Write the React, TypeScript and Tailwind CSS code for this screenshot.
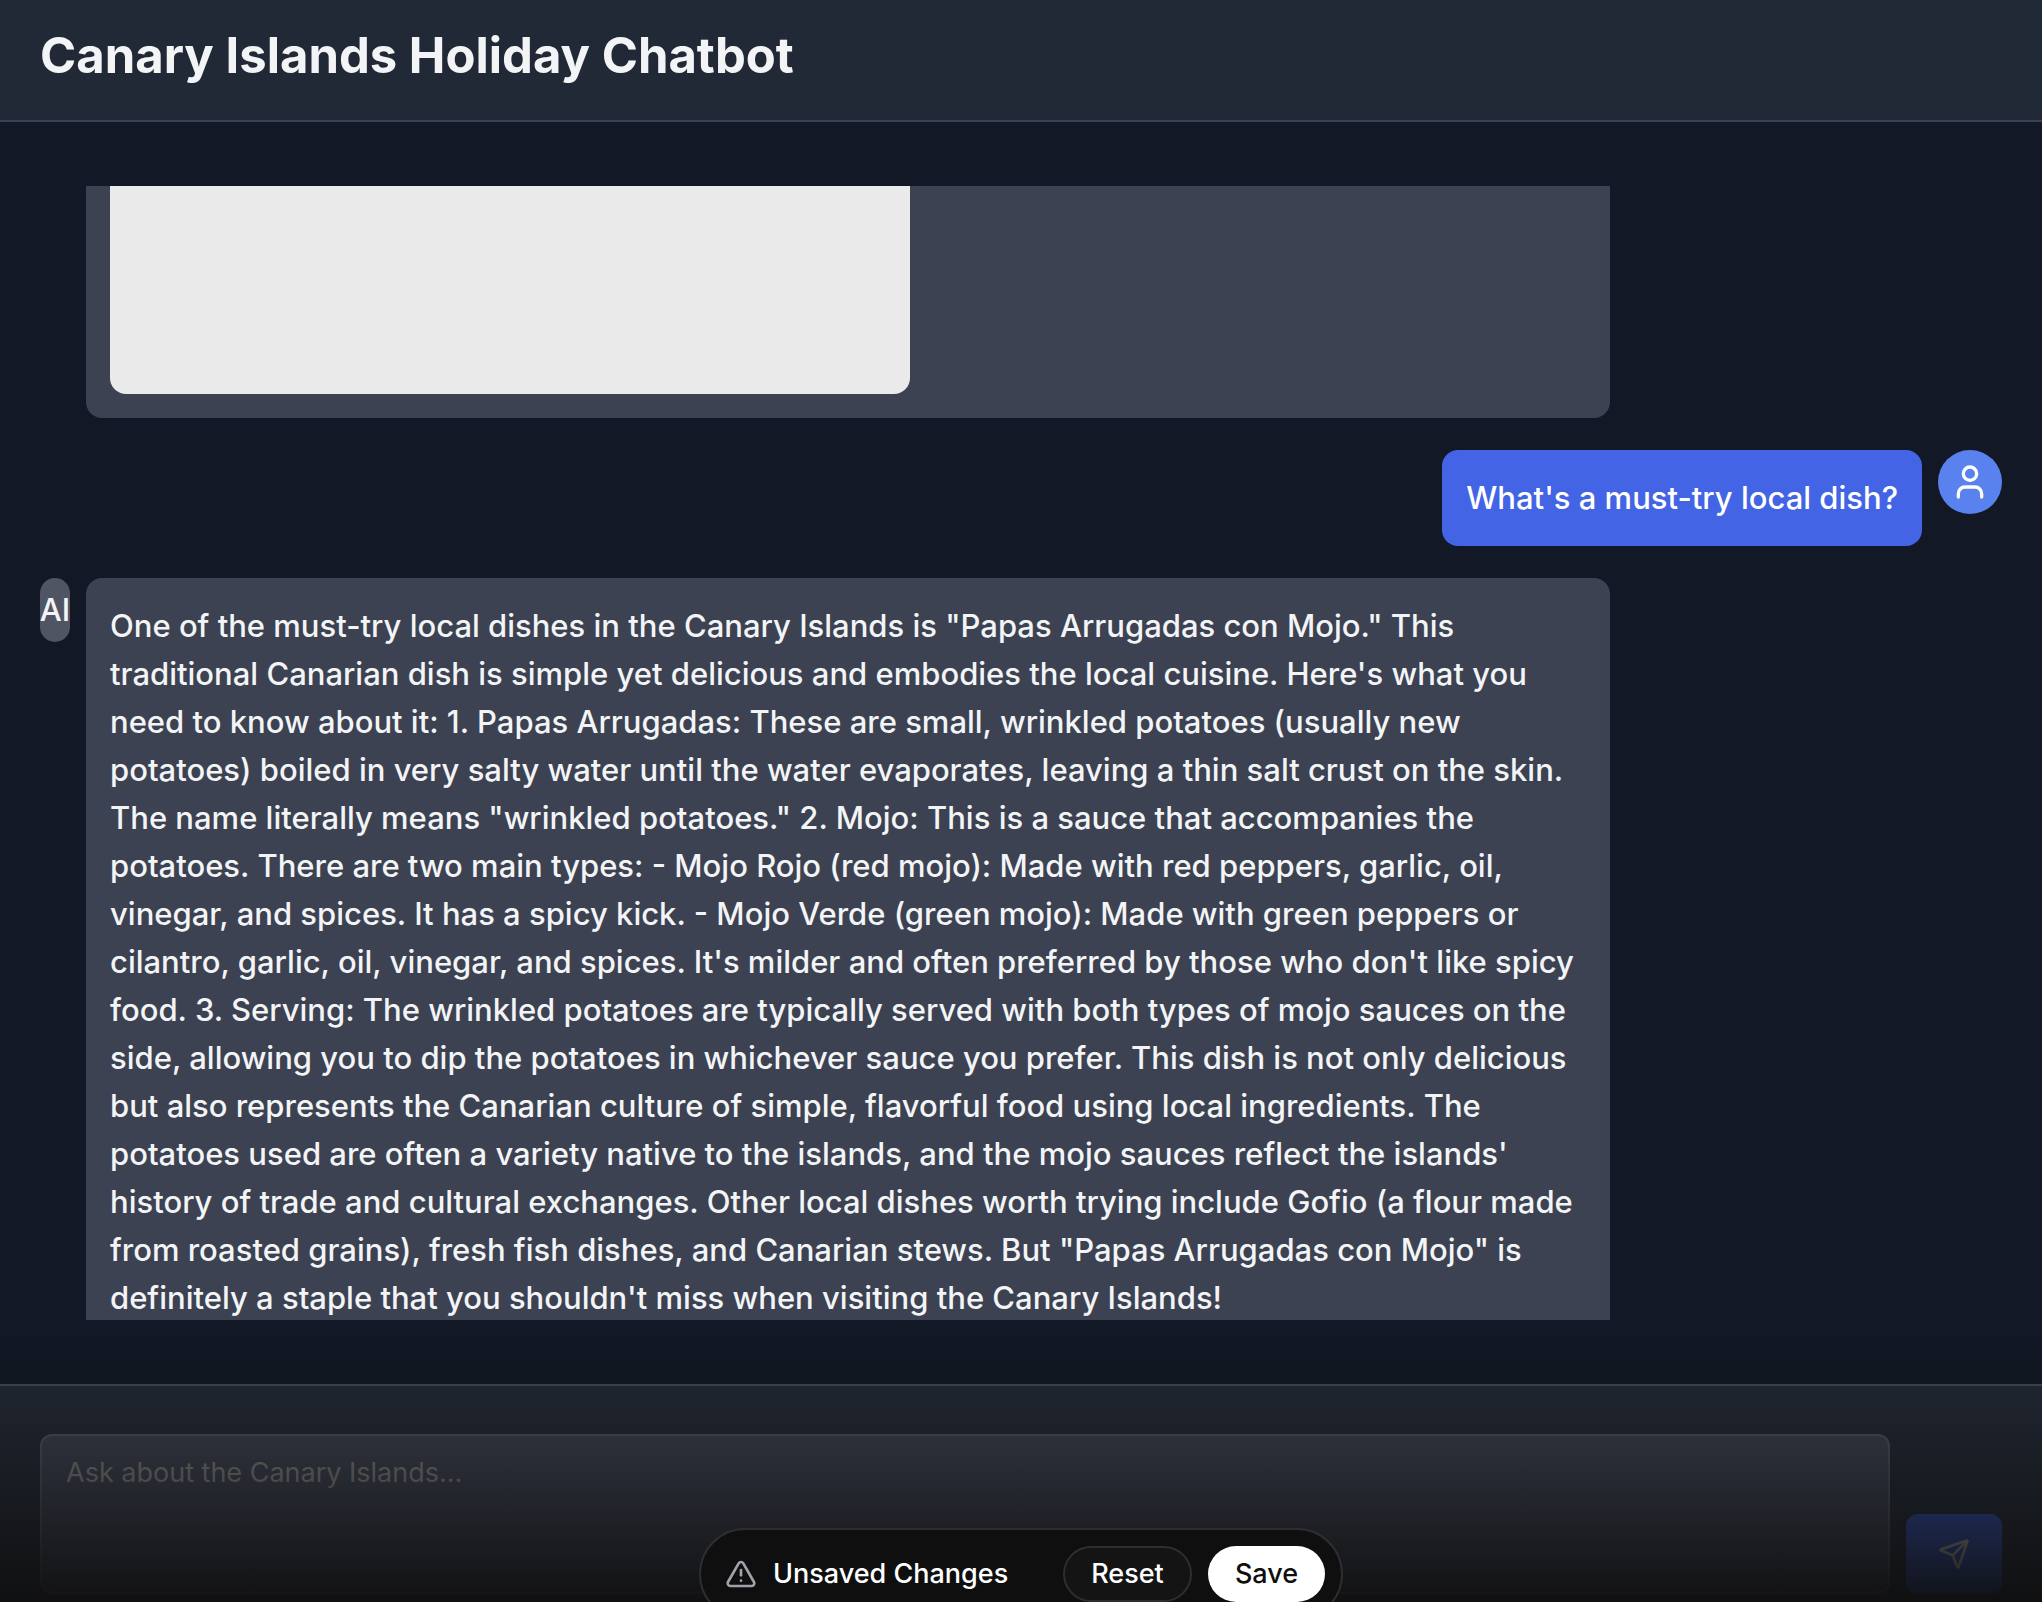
import { Send, TriangleAlert, User } from "lucide-react";

const answer =
  'One of the must-try local dishes in the Canary Islands is "Papas Arrugadas con Mojo." This ' +
  "traditional Canarian dish is simple yet delicious and embodies the local cuisine. Here's what you " +
  "need to know about it: 1. Papas Arrugadas: These are small, wrinkled potatoes (usually new " +
  "potatoes) boiled in very salty water until the water evaporates, leaving a thin salt crust on the skin. " +
  'The name literally means "wrinkled potatoes." 2. Mojo: This is a sauce that accompanies the ' +
  "potatoes. There are two main types: - Mojo Rojo (red mojo): Made with red peppers, garlic, oil, " +
  "vinegar, and spices. It has a spicy kick. - Mojo Verde (green mojo): Made with green peppers or " +
  "cilantro, garlic, oil, vinegar, and spices. It's milder and often preferred by those who don't like spicy " +
  "food. 3. Serving: The wrinkled potatoes are typically served with both types of mojo sauces on the " +
  "side, allowing you to dip the potatoes in whichever sauce you prefer. This dish is not only delicious " +
  "but also represents the Canarian culture of simple, flavorful food using local ingredients. The " +
  "potatoes used are often a variety native to the islands, and the mojo sauces reflect the islands' " +
  "history of trade and cultural exchanges. Other local dishes worth trying include Gofio (a flour made " +
  'from roasted grains), fresh fish dishes, and Canarian stews. But "Papas Arrugadas con Mojo" is ' +
  "definitely a staple that you shouldn't miss when visiting the Canary Islands!";

export default function App() {
  return (
    <div className="relative flex h-screen flex-col overflow-hidden bg-[#121825] font-['Inter',sans-serif] text-gray-100">
      <header className="shrink-0 border-b-2 border-[#3b4150] bg-[#222936] px-10 pt-6 pb-8">
        <h1 className="text-[49px] leading-[64px] font-bold">Canary Islands Holiday Chatbot</h1>
      </header>

      <main className="flex min-h-0 flex-1 flex-col px-10 py-16">
        <div className="flex min-h-0 flex-1 flex-col gap-8 overflow-hidden text-[31px] leading-[48px] font-[450]">
          <div className="flex max-w-[80%] shrink-0 pl-[46px]">
            <div className="flex-1 rounded-b-2xl bg-[#3c4251] px-6 pb-6">
              <div className="h-52 max-w-[800px] rounded-b-2xl bg-[#eaeaea]" />
            </div>
          </div>

          <div className="flex shrink-0 items-start justify-end gap-4">
            <p className="rounded-2xl bg-[#4364e4] p-6 text-white">What's a must-try local dish?</p>
            <span className="flex size-16 items-center justify-center rounded-full bg-[#5a82ee] text-white">
              <User size={40} />
            </span>
          </div>

          <div className="flex max-w-[80%] shrink-0 items-start gap-4">
            <span className="flex h-16 w-[30px] shrink-0 items-center justify-center rounded-full bg-[#4f5562]">
              AI
            </span>
            <p className="min-w-0 flex-1 rounded-2xl bg-[#3c4251] p-6">{answer}</p>
          </div>
        </div>
      </main>

      <form
        className="-mb-10 flex shrink-0 items-end gap-4 border-t-2 border-[#424857] bg-[#222936] px-10 py-12"
        onSubmit={(e) => e.preventDefault()}
      >
        <textarea
          aria-label="Message"
          placeholder="Ask about the Canary Islands..."
          className="h-40 min-w-0 flex-1 resize-none rounded-xl border-2 border-[#4f5562] bg-[#3c4251] px-6 py-4 text-[27px] leading-[42px] placeholder:text-[#848484]"
        />
        <button
          type="submit"
          aria-label="Send"
          className="flex h-20 w-24 items-center justify-center rounded-xl bg-[#3350b4] text-[#b4b4b0]"
        >
          <Send size={32} />
        </button>
      </form>

      <div className="pointer-events-none absolute inset-x-0 bottom-0 h-[270px] bg-linear-to-t from-[#0f0f0f]/95 via-[#0f0f0f]/50 via-45% to-[#0f0f0f]/0" />

      <div
        role="status"
        className="absolute -bottom-[18px] left-1/2 flex h-[92px] w-[644px] -translate-x-1/2 items-center rounded-full border-2 border-[#2e2e32] bg-[#0f0f0f] pr-4 pl-6 text-[27px] font-medium text-white"
      >
        <TriangleAlert size={32} className="mr-4 text-[#a1a1aa]" />
        <span className="flex-1">Unsaved Changes</span>
        <button className="mr-4 h-14 w-[129px] rounded-full border-2 border-[#2e2e2e] bg-[#141414]">Reset</button>
        <button className="h-14 w-[117px] rounded-full bg-white text-[#0f0f0f]">Save</button>
      </div>
    </div>
  );
}
